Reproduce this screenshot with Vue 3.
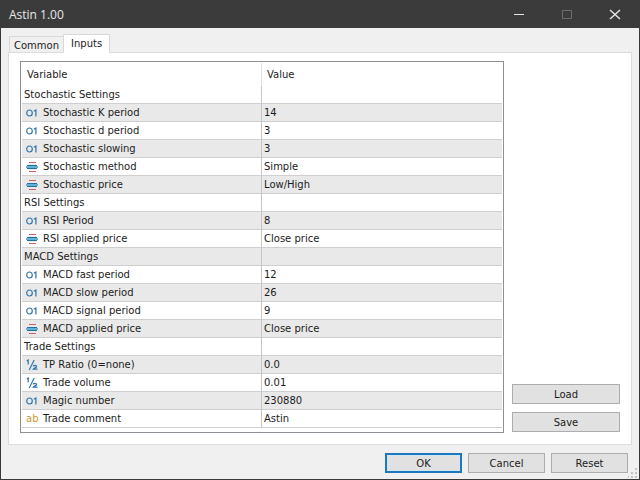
<script setup>
import { ref } from 'vue'

const rows = ref([
  { name: 'Stochastic Settings' },
  { type: 'int', name: 'Stochastic K period', value: '14' },
  { type: 'int', name: 'Stochastic d period', value: '3' },
  { type: 'int', name: 'Stochastic slowing', value: '3' },
  { type: 'enum', name: 'Stochastic method', value: 'Simple' },
  { type: 'enum', name: 'Stochastic price', value: 'Low/High' },
  { name: 'RSI Settings' },
  { type: 'int', name: 'RSI Period', value: '8' },
  { type: 'enum', name: 'RSI applied price', value: 'Close price' },
  { name: 'MACD Settings' },
  { type: 'int', name: 'MACD fast period', value: '12' },
  { type: 'int', name: 'MACD slow period', value: '26' },
  { type: 'int', name: 'MACD signal period', value: '9' },
  { type: 'enum', name: 'MACD applied price', value: 'Close price' },
  { name: 'Trade Settings' },
  { type: 'double', name: 'TP Ratio (0=none)', value: '0.0' },
  { type: 'double', name: 'Trade volume', value: '0.01' },
  { type: 'int', name: 'Magic number', value: '230880' },
  { type: 'string', name: 'Trade comment', value: 'Astin' },
])
</script>

<template>
  <div class="window">
    <header class="titlebar">
      <h1>Astin 1.00</h1>
      <div class="controls">
        <button type="button" aria-label="Minimize">
          <svg width="12" height="12" viewBox="0 0 12 12"><path d="M1 5.500h10" /></svg>
        </button>
        <button type="button" aria-label="Maximize" disabled>
          <svg width="12" height="12" viewBox="0 0 12 12"><path d="M1.500 1.500h9v8h-9z" /></svg>
        </button>
        <button type="button" aria-label="Close">
          <svg width="12" height="12" viewBox="0 0 12 12"><path class="cross" d="M1 1l10 9M11 1L1 10" /></svg>
        </button>
      </div>
    </header>

    <main class="body">
      <div class="tabs" role="tablist">
        <button type="button" class="tab" role="tab" aria-selected="false">Common</button>
        <button type="button" class="tab active" role="tab" aria-selected="true">Inputs</button>
      </div>

      <section class="panel" role="tabpanel">
        <div class="grid-box">
          <table>
            <thead>
              <tr>
                <th scope="col" class="name-col">Variable</th>
                <th scope="col">Value</th>
              </tr>
            </thead>
            <tbody>
              <tr v-for="row in rows" :key="row.name">
                <td>
                  <div class="cell">
                    <span v-if="row.type" class="icon">
                      <svg v-if="row.type === 'int'" width="12" height="12" viewBox="0 0 12 12">
                        <ellipse class="blue" cx="3.500" cy="6" rx="2.800" ry="3" />
                        <path class="blue" d="M7.800 4.300L9.900 3v6.600" />
                      </svg>
                      <svg v-else-if="row.type === 'enum'" width="12" height="12" viewBox="0 0 12 12">
                        <path class="red" d="M3 1.500h7M3 10.500h7" />
                        <path class="slate" d="M2 3.500h8M2 8.500h8" />
                        <path class="edge" d="M1 4.500h10M1 7.500h10" />
                        <path class="light" d="M0 6h12" />
                      </svg>
                      <svg v-else-if="row.type === 'double'" width="12" height="12" viewBox="0 0 12 12">
                        <path class="blue" d="M0.800 2L2.200 1v4.500M8.200 1L3.200 11" />
                        <path class="blue" d="M7.200 7.300c0.300-1.200 3.400-1.300 3.400 0.100c0 1.100-2.300 1.500-3.300 2.700h4.100" />
                      </svg>
                      <span v-else class="ab">ab</span>
                    </span>
                    <span>{{ row.name }}</span>
                  </div>
                </td>
                <td>{{ row.value }}</td>
              </tr>
            </tbody>
          </table>
        </div>
        <div class="side">
          <button type="button" class="btn">Load</button>
          <button type="button" class="btn">Save</button>
        </div>
      </section>

      <footer class="actions">
        <button type="button" class="btn default">OK</button>
        <button type="button" class="btn">Cancel</button>
        <button type="button" class="btn">Reset</button>
      </footer>
      <svg class="grip" width="10" height="10" viewBox="0 0 10 10" aria-hidden="true">
        <path d="M7 0h2v2h-2zM7 4h2v2h-2zM7 8h2v2h-2zM3 4h2v2h-2zM3 8h2v2h-2zM0 8h1v2h-1z" />
      </svg>
    </main>
  </div>
</template>

<style>
body {
  margin: 0;
}
</style>

<style scoped>
.window {
  box-sizing: border-box;
  display: flex;
  flex-direction: column;
  min-height: 100vh;
  border: 1px solid #3a3a3a;
  background: #f0f0f0;
  color: #1c1c1c;
  font-family: "DejaVu Sans", Verdana, sans-serif;
  font-size: 10px;
  line-height: 12px;
}

button {
  font: inherit;
  color: inherit;
}

.titlebar {
  display: flex;
  align-items: center;
  justify-content: space-between;
  height: 27px;
  padding-left: 8px;
  background: #3b3b3b;
  color: #e8e8e8;
}

.titlebar h1 {
  margin: 0;
  font: 400 12px/16px "Open Sans", sans-serif;
}

.controls {
  display: flex;
}

.controls button {
  display: flex;
  align-items: center;
  justify-content: center;
  width: 48px;
  height: 27px;
  padding: 0;
  border: 0;
  background: none;
}

.controls path {
  fill: none;
  stroke: #e4e4e4;
}

.controls .cross {
  stroke-width: 1.5;
}

.controls button:disabled path {
  stroke: #6c6c6c;
}

.body {
  position: relative;
  display: flex;
  flex: 1;
  flex-direction: column;
  padding: 6px 7px;
}

.tabs {
  display: flex;
  align-items: flex-end;
  height: 18px;
  padding-left: 1px;
}

.tab {
  height: 16px;
  padding: 2px 4px 0;
  border: 1px solid #d9d9d9;
  border-right: 0;
  border-bottom: 0;
  background: #f0f0f0;
}

.tab.active {
  z-index: 1;
  height: 19px;
  margin-bottom: -1px;
  padding: 0 7px;
  border-right: 1px solid #d9d9d9;
  background: #fff;
}

.panel {
  display: flex;
  flex: 1;
  gap: 8px;
  padding: 8px 11px 11px;
  border: 1px solid #dcdcdc;
  background: #fff;
}

.grid-box {
  flex: 1;
  padding: 1px 1px 3px;
  border: 1px solid #8c8f94;
}

table {
  width: 100%;
  border-collapse: separate;
  border-spacing: 0;
  table-layout: fixed;
}

th,
td {
  height: 17px;
  padding: 0 2px;
  text-align: left;
  font-weight: 400;
  border-bottom: 1px solid #cfcfcf;
}

th {
  height: 23px;
  padding: 0 5px;
  border-bottom: 0;
}

th:first-child,
td:first-child {
  border-right: 1px solid #c4c4c4;
}

th:first-child {
  border-right-color: #e2e2e2;
}

.name-col {
  width: 50%;
  box-sizing: border-box;
}

tbody tr:nth-child(even) td {
  background: #e9e9e9;
}

.cell {
  display: flex;
  align-items: center;
  gap: 5px;
}

.icon {
  display: flex;
  width: 12px;
  height: 12px;
  margin-left: 2px;
}

.blue {
  fill: none;
  stroke: #2f75a8;
  stroke-width: 1.2;
}

.red {
  stroke: #cc5f68;
}

.slate {
  stroke: #e3eaf0;
}

.edge {
  stroke: #2d6c94;
}

.light {
  stroke: #62b2d6;
  stroke-width: 2;
}

.ab {
  color: #c8962e;
}

.side {
  display: flex;
  flex-direction: column;
  justify-content: flex-end;
  gap: 8px;
  width: 108px;
  padding-bottom: 1px;
}

.btn {
  height: 20px;
  padding: 1px 0 0;
  border: 1px solid #adadad;
  background: #e1e1e1;
}

.actions {
  display: flex;
  justify-content: flex-end;
  gap: 6px;
  padding: 8px 4px 0 0;
}

.actions .btn {
  width: 77px;
}

.btn.default {
  border: 2px solid #1f78bd;
  box-shadow: inset 0 0 0 1px #cfe6f5;
}

.grip {
  position: absolute;
  right: 1px;
  bottom: 1px;
  fill: #c3c3c3;
}
</style>
